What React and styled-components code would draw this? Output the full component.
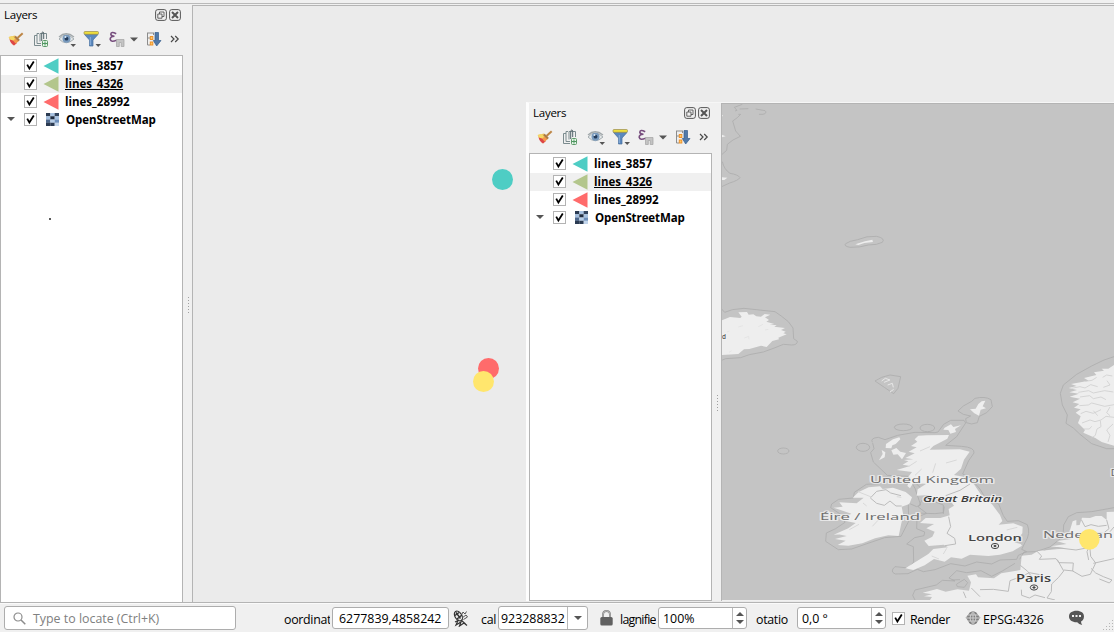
import React from "react";
import styled, { createGlobalStyle } from "styled-components";

const Global = createGlobalStyle`
  * { box-sizing: border-box; }
  body { margin: 0; overflow: hidden; background: #f0f0f0; }
`;

const Window = styled.div`
  width: 1114px;
  height: 632px;
  display: flex;
  flex-direction: column;
  background: #f0f0f0;
  color: #000;
  font-family: "Open Sans", "Noto Sans", sans-serif;
  font-size: 12px;
  overflow: hidden;
`;

const TopEdge = styled.div`
  height: 5px;
  flex: none;
  border-top: 3px solid #f0f0f0;
  &::after { content: ""; display: block; height: 1px; background: #b9b9b9; }
`;

const Workspace = styled.div`
  display: flex;
  height: 598px;
  flex: none;
`;

const Dock = styled.section`
  width: 183px;
  flex: none;
  display: flex;
  flex-direction: column;
`;

const DockTitle = styled.header`
  height: 20px;
  display: flex;
  align-items: center;
  padding: 0 2px 1px 4px;
  gap: 2px;
  font-size: 11.5px;
  letter-spacing: -0.25px;
  svg { display: block; flex: none; }
`;

const TitleText = styled.span`
  flex: 1;
  line-height: 18px;
`;

const Tools = styled.div`
  height: 30px;
  display: flex;
  align-items: center;
  padding: 0 0 2px 7px;
  svg { display: block; }
`;

const Tree = styled.div`
  flex: 1;
  background: #fff;
  border: 1px solid #b4b4b4;
  padding-top: 1px;
`;

const Row = styled.div`
  height: 18px;
  display: flex;
  align-items: center;
  padding-left: 3px;
  background: ${(p) => (p.$current ? "#f0f0f0" : "#fff")};
`;

const Expander = styled.span`
  width: 20px;
  height: 18px;
  display: flex;
  align-items: center;
  padding: 0 0 2px 3px;
  flex: none;
`;

const Check = styled.span`
  display: block;
  width: 13px;
  height: 13px;
  border: 1px solid #b3b3b3;
  background: #fff;
  flex: none;
  margin-bottom: ${(p) => p.$lift || 0}px;
  svg { display: block; }
`;

const Symbol = styled.span`
  width: 28px;
  height: 18px;
  padding: 0 0 1px ${(p) => p.$inset || 6}px;
  display: flex;
  align-items: center;
  flex: none;
`;

const LayerName = styled.span`
  font-weight: 700;
  font-size: 11.5px;
  line-height: 18px;
  letter-spacing: ${(p) => p.$spacing || "0px"};
  text-decoration: ${(p) => (p.$underline ? "underline" : "none")};
  text-underline-offset: 1px;
  white-space: nowrap;
  padding-left: ${(p) => p.$indent || 0}px;
`;

const Splitter = styled.div`
  width: 9px;
  flex: none;
  display: flex;
  flex-direction: column;
  align-items: center;
  gap: 2px;
  padding: 292px 0 0 1px;
`;

const Dot = styled.i`
  width: 1px;
  height: 1px;
  background: #a0a0a0;
`;

const Canvas = styled.main`
  position: relative;
  flex: 1;
  background: #ebebeb;
  border: solid #b4b4b4;
  border-width: 1px 0 1px 1px;
`;

const Marker = styled.span`
  position: absolute;
  left: ${(p) => p.$x}px;
  top: ${(p) => p.$y}px;
  width: ${(p) => p.$size || 21}px;
  height: ${(p) => p.$size || 21}px;
  border-radius: 50%;
  background: ${(p) => p.$color};
`;

const InnerWindow = styled.div`
  position: absolute;
  left: 333px;
  top: 96px;
  width: 588px;
  height: 499px;
  display: flex;
  background: #f0f0f0;
  border-left: 3px solid #fdfdfd;
  border-top: 1px solid #f6f6f6;
`;

const MapFrame = styled.div`
  flex: 1;
  border: solid #b4b4b4;
  border-width: 1px 0 0 1px;
  overflow: hidden;
  svg { display: block; }
`;

const Status = styled.footer`
  flex: 1;
  display: flex;
  align-items: center;
  border-top: 1px solid #fafafa;
  padding: 0 0 0 4px;
  font-size: 12.4px;
  position: relative;
  svg { display: block; flex: none; }
`;

const Field = styled.div`
  width: ${(p) => p.$w}px;
  height: ${(p) => p.$h || 22}px;
  margin-left: ${(p) => p.$ml || 0}px;
  border: 1px solid #adadad;
  border-radius: 3px;
  background: #fff;
  display: flex;
  align-items: center;
  flex: none;
  padding-left: ${(p) => p.$pad || 4}px;
  color: ${(p) => p.$color || "#000"};
  white-space: nowrap;
  overflow: hidden;
`;

const Value = styled.span`
  flex: 1;
  padding-top: 2px;
  padding-left: ${(p) => p.$indent || 0}px;
  line-height: 18px;
`;

const Stepper = styled.span`
  width: ${(p) => p.$w || 14}px;
  height: 100%;
  border-left: 1px solid #b9b9b9;
  display: flex;
  flex-direction: column;
  justify-content: center;
  align-items: center;
  gap: 4px;
  flex: none;
`;

const Label = styled.span`
  width: ${(p) => p.$w}px;
  margin-left: ${(p) => p.$ml}px;
  padding-top: 3px;
  line-height: 18px;
  white-space: nowrap;
  overflow: hidden;
  flex: none;
  letter-spacing: ${(p) => p.$spacing || "-0.3px"};
`;

const StatusIcon = styled.span`
  margin-left: ${(p) => p.$ml}px;
  flex: none;
`;

const Tick = () => (
  <svg width="11" height="11" viewBox="0 0 11 11">
    <path d="M2.2 4.6 L4.4 8.6 L8.8 1.6" fill="none" stroke="#000" strokeWidth="1.8" />
  </svg>
);

const Arrow = ({ up, w = 8, color = "#555" }) => (
  <svg width={w} height="4" viewBox="0 0 8 4">
    <path d={up ? "M0 4 L4 0 L8 4Z" : "M0 0 L4 4 L8 0Z"} fill={color} />
  </svg>
);

const FloatIcon = () => (
  <svg width="12" height="12" viewBox="0 0 12 12" fill="none" stroke="#555">
    <rect x="0.6" y="0.6" width="10.8" height="10.8" rx="2.2" />
    <path d="M4.5 5V3H9V7.5H7M2.8 5H7V9.2H2.8Z" strokeWidth="0.9" />
  </svg>
);

const CloseIcon = () => (
  <svg width="12" height="12" viewBox="0 0 12 12" fill="none" stroke="#555">
    <rect x="0.6" y="0.6" width="10.8" height="10.8" rx="2.2" />
    <path d="M3 3L9 9M9 3L3 9" strokeWidth="2" />
  </svg>
);

const ToolIcons = () => (
  <svg width="176" height="24" viewBox="7 27 176 24" fill="none">
    {/* style brush */}
    <path d="M8.7 37L15 35.5L19.5 40L14 45.5Q10.5 43 8.7 37Z" fill="#e9bd5c" />
    <path d="M8.7 37L13 36L15.5 40L12 42Z" fill="#f5d866" />
    <path d="M9.5 39.5L13 40.5L17 43L14 45.5Q11 44 9.5 39.5Z" fill="#dd4547" />
    <path d="M13 40.5L16 38.5L19.5 40.5L15.5 43.5Z" fill="#f39a4b" />
    <path d="M15 36.5L19 40.5" stroke="#a97a48" strokeWidth="2" />
    <path d="M17.5 38L22.7 33.2" stroke="#bd8545" strokeWidth="2" />
    {/* add group */}
    <path d="M37 35.5H34.5V45.5H41M39 33.5H37V43.5H41" stroke="#7b8b8e" />
    <path d="M40 41.5V33.5H46.5V39" stroke="#7b8b8e" />
    <path d="M41.7 41V33.5Q43 30 43.7 33.5V39" stroke="#52646a" />
    <rect x="42.5" y="40.5" width="5" height="6" rx="1" fill="#e5f5e7" stroke="#5d9a69" />
    <path d="M45 41.5V45.5M43 43.5H47" stroke="#4d9760" />
    {/* visibility */}
    <path d="M59 39Q66 31 74 39Q66 46.5 59 39Z" fill="#e4e8e9" stroke="#a4acb0" />
    <circle cx="66.5" cy="38.7" r="4" fill="#7799bd" />
    <circle cx="66.5" cy="38.7" r="1.9" fill="#243b5a" />
    <circle cx="65.5" cy="37" r="1" fill="#dce9f5" />
    <path d="M59 37Q66 30.5 74 37" stroke="#a0a7aa" strokeWidth="1.3" />
    <path d="M70.5 44H76L73.2 47Z" fill="#555" />
    {/* filter */}
    <path d="M84.5 34.5H98L93 40V46H89.5V40Z" fill="#5b88bd" stroke="#456d9b" strokeWidth="0.7" />
    <rect x="84" y="31.5" width="14.5" height="2.8" rx="1" fill="#efdf3c" stroke="#998d4d" strokeWidth="0.7" />
    <path d="M90.3 37V45" stroke="#8bb1dd" />
    <path d="M95.5 44H101L98.2 47Z" fill="#555" />
    {/* filter by expression */}
    <path d="M116.2 33.7Q111 31.2 110.8 34.2Q111 36.1 114.5 36.2Q110 36.3 110.2 39.3Q111 42.8 116.7 40.1" stroke="#764d7d" strokeWidth="1.6" />
    <path d="M116.5 39.5H124V46.5H121.2V42.5H119.3V46.5H116.5Z" fill="#c4c4c4" stroke="#a2a2a2" strokeWidth="0.7" />
    <path d="M130 37.5H138L134 41.5Z" fill="#555" />
    {/* expand all */}
    <path d="M147 33H154M147.5 33V45H150M153.5 33V35M147.5 38H150" stroke="#8c8c8c" />
    <rect x="150.3" y="36.5" width="2.5" height="3" fill="#ffc966" stroke="#ef9229" />
    <rect x="150.3" y="42" width="2.5" height="3" fill="#ffc966" stroke="#ef9229" />
    <path d="M155 32.5H158.5V40.5H161L156.7 46L153.3 40.5H155Z" fill="#5179a8" stroke="#375f8e" strokeWidth="0.7" />
    <path d="M171 36L174 39L171 42M175.2 36L178.2 39L175.2 42" stroke="#484848" strokeWidth="1.2" />
  </svg>
);

const Fan = ({ color }) => (
  <svg width="16" height="16" viewBox="0 0 16 16">
    <path d="M0.5 8 L15.5 0.2 V15.8Z" fill={color} />
  </svg>
);

const RASTER = [
  "#2b3b52", "#a9c3e2", "#33455f",
  "#a3bede", "#1f2c40", "#a9c3e2",
  "#4c678c", "#b7cee8", "#6d8fbb",
  "#2b3b52", "#2b3b52", "#c3d6ec",
];

const RasterIcon = () => (
  <svg width="13" height="13" viewBox="0 0 12 12">
    {RASTER.map((c, i) => (
      <rect key={i} x={(i % 3) * 4} y={Math.floor(i / 3) * 3} width="4.1" height="3.1" fill={c} />
    ))}
  </svg>
);

const LAYERS = [
  { name: "lines_3857", color: "#4ecdc4" },
  { name: "lines_4326", color: "#b3c68c", current: true },
  { name: "lines_28992", color: "#ff6b6b" },
];

const LayersDock = () => (
  <Dock>
    <DockTitle>
      <TitleText>Layers</TitleText>
      <FloatIcon />
      <CloseIcon />
    </DockTitle>
    <Tools><ToolIcons /></Tools>
    <Tree>
      {LAYERS.map((l) => (
        <Row key={l.name} $current={l.current}>
          <Expander />
          <Check $lift={2}><Tick /></Check>
          <Symbol><Fan color={l.color} /></Symbol>
          <LayerName $underline={l.current}>{l.name}</LayerName>
        </Row>
      ))}
      <Row>
        <Expander><Arrow /></Expander>
        <Check $lift={2}><Tick /></Check>
        <Symbol $inset={9}><RasterIcon /></Symbol>
        <LayerName $indent={1} $spacing="-0.1px">OpenStreetMap</LayerName>
      </Row>
    </Tree>
  </Dock>
);

const Grip = () => (
  <Splitter>
    {[0, 1, 2, 3, 4, 5].map((i) => <Dot key={i} />)}
  </Splitter>
);

const Place = ({ x, y, w, size = 9.5, color = "#6c6c6c", bold, italic, children }) => (
  <text
    x={x} y={y} textLength={w} lengthAdjust="spacingAndGlyphs"
    fontFamily='"Open Sans", "Noto Sans", sans-serif' fontSize={size}
    fontWeight={bold ? 600 : 400} fontStyle={italic ? "italic" : "normal"}
    fill={color} stroke="#f2f2f2" strokeWidth="2.2" strokeOpacity="0.75"
    strokeLinejoin="round" paintOrder="stroke"
  >
    {children}
  </text>
);

const NorthernEurope = () => (
  <svg width="392" height="496" viewBox="722 104 392 496">
    <rect x="722" y="104" width="392" height="496" fill="#c4c4c4" />
    {/* Greenland coast, Jan Mayen and Iceland */}
    <g transform="translate(715 100) scale(0.33333)" fill="none" stroke="#acacac" strokeWidth="2.4">
      <path d="M82 13L58 22L66 31L60 33M74 27L100 26M122 27L150 32Q158 39 144 43L132 43M70 43H77L67 53L53 63L62 93L76 109L54 120L37 133L35 151L20 164M22 185Q27 208 45 220Q70 224 75 233Q70 241 44 249L20 260" />
      <path d="M392 431Q402 423 428 419Q455 407 485 409Q512 415 502 427Q487 435 460 435Q435 443 405 442Q385 438 392 431Z" />
      <path d="M20 627L29 637L52 629L87 625L133 630L180 635L200 649L220 665L234 684L236 716L247 724Q247 735 230 735L205 733L178 744L145 756L103 764L77 773L32 776L20 781" />
      <g fill="#eee" stroke="none">
        <path d="M20 661L45 651L76 654L80 650L70 637L96 636L101 644L115 643L124 649L138 650L149 642L166 644L150 652L162 660L154 665L178 672L164 675L185 675L178 680L210 684L198 690L212 695L205 700L215 703L190 713L192 718L172 723L155 741L138 737L103 747L87 748L70 762L20 765Z" />
        <path d="M421 433L450 424L472 419L474 426L448 429L430 435Z" />
        <path d="M20 104L32 109L20 112ZM20 232L37 233L28 240L20 240ZM20 43L24 47L20 50Z" />
      </g>
      <path d="M70 681L84 677M88 714L101 709L102 718M150 690L160 688M36 696L43 693M130 680L144 673M42 757L50 752" stroke="#dfdfdf" strokeWidth="2" />
    </g>
    {/* British Isles, Norway and the continent */}
    <g transform="translate(800 360) scale(0.33333)" fill="none" stroke="#acacac" strokeWidth="2.4" strokeLinejoin="round">
      <path d="M225 63L245 52L270 45L302 50L294 85L281 101L253 82Z" />
      <ellipse cx="310" cy="202" rx="27" ry="10" />
      <ellipse cx="382" cy="204" rx="22" ry="11" />
      <ellipse cx="189" cy="262" rx="20" ry="12" />
      <ellipse cx="-50" cy="273" rx="17" ry="9" />
      <path d="M474 153L490 138L515 124L525 115Q555 108 573 119L577 140L560 158L538 169L532 188L515 192L499 188L497 176L512 168L490 163Z" />
      <path d="M217 247Q210 234 235 232L255 239L293 226L345 217L405 218L414 216L431 193L452 181L492 181L497 189L470 230L437 256L485 259Q525 262 522 279L506 302L488 342L510 353L540 387L555 412L596 432L610 467L622 484L655 482L682 494Q693 520 675 548L665 568L680 575L655 586L650 598L600 600L575 612L530 606L495 618L452 611L405 629L370 635L352 628L324 641L286 642Q268 635 285 620L326 624L341 606L340 560L320 552L344 533L372 527L374 516L350 506L351 472L380 460L355 441L366 420L401 424L430 435L430 462M350 459L405 461L430 458L433 440M350 372L368 390L395 400" />
      <path d="M218 249L222 266L212 278L220 306L262 346L324 349L345 385L362 435L350 440L325 429L326 484L303 529L254 533L207 549L155 567L115 569L77 544L79 519L107 506L135 487L125 465L92 443L95 432L116 418L160 414L163 397L199 373L236 371" />
      <path d="M942 -10L912 0L875 18L830 43L790 75L781 100L787 135L802 165L798 190L820 204L839 222L875 251L920 266H942" />
      <path d="M942 443L875 455L830 458L805 470L791 495L789 530L750 561L707 575L672 576L659 598M645 610L607 633L575 649L543 632L500 638L470 632L447 654L465 663L427 661L409 675L345 690L338 706L345 720M455 660L480 659M475 669Q465 672 472 680L493 682L503 668L493 658Z" />
      <g fill="#eee" stroke="none">
        <path d="M535 132L545 124L556 122L548 139L558 145L542 149L537 167L523 160L510 148L527 146ZM434 203L453 193L460 201L483 196L465 207L468 216L451 221L445 210L430 209Z" />
        <path d="M258 252L279 238L298 232L301 238L287 252L277 256L274 265L257 264ZM245 270L256 277L254 292L237 301L248 282ZM274 271L289 264L301 275L318 279L306 298L293 283L280 284Z" />
        <path d="M355 227L380 226L447 225L442 236L400 258L389 269L480 268L509 275L492 299L483 326L462 345L490 350L522 373L545 407L576 433L600 465L607 483L596 494L640 490L668 500L667 520L655 535L644 547L662 552L666 557L638 574L600 584L565 588L510 584L485 596L453 592L434 605L402 597L374 616L340 630L316 625L350 604L385 582L400 567L444 562L431 554L386 558L373 542L397 530L404 515L379 505L402 492L360 489L377 474L421 474L449 466L446 447L462 437L450 421L430 427L386 405L350 407L353 388L379 371L339 370L330 385L322 378L332 354L325 350L336 336L290 330L330 318L308 314L325 304L312 300L340 298L316 294L344 280L326 275L350 262L333 258L352 245L344 238Z" />
        <path d="M158 413L176 396L206 382L240 379L248 387L279 383L317 396L336 412L328 432L305 440L310 466L304 490L296 528L265 526L225 535L187 550L145 557L113 555L137 542L105 537L140 528L115 523L152 522L101 524L145 505L167 489L119 479L154 461L101 443L128 440L118 427L170 430L191 413Z" />
        <path d="M942 15L925 26L905 26L912 32L882 37L889 45L852 54L866 62L813 72L830 78L806 84L831 90L808 97L837 101L809 110L840 116L818 127L838 132L822 143L842 148L827 158L842 169L834 189L855 210L850 218L886 234L905 246L942 257Z" />
        <path d="M942 455L920 456L920 480L905 468L887 468L870 474L846 473L839 495L829 496V480L818 484L809 514L830 522L790 528L815 537L770 543L800 552L752 559L800 565L714 573L695 584L665 587L661 630L604 640L582 655L534 652L528 643L502 647L513 667L507 692L472 688L437 695L411 687L368 698L396 703L372 709L396 711L390 720H942Z" />
      </g>
      <path d="M245 63L256 55L270 60L252 67M263 75L277 70L280 82M270 96L281 88" stroke="#e8e8e8" strokeWidth="3" />
      <path d="M815 85L840 80L855 84L872 74L893 80M835 97L866 92L880 99L914 92L940 96M840 111L869 107L880 116L903 111L918 119M838 137L865 135L875 129L914 139L942 134M842 161L858 154L880 160L903 149M846 189L870 180L885 185L903 180L918 169L942 172M872 236L886 226L891 207L903 200L901 182M924 246L930 226L920 210L939 192M850 207L868 207L875 199M856 64L876 61L890 52M908 52L920 45L937 48M921 62L930 75L910 82M930 141L920 158L930 167M880 152L893 167" stroke="#cbcbcb" strokeWidth="2.2" />
      <path d="M212 413L230 394L258 389L272 399L303 407M211 414L230 430L253 436L270 423L288 438L305 438M437 407L480 391L510 372M446 470L452 500L441 520L464 535L467 552L435 557M661 616L683 634L694 649M711 574L725 588L718 598L768 596L777 608L820 609L818 633L846 649L871 643L887 609L872 589L870 567M731 570L770 563L828 570L860 564M880 610L942 596M772 599L791 633L776 652L755 672L754 695L741 714L765 720M791 630L820 633M660 652L688 638L720 644M664 689L665 706L688 714L705 705L735 713M540 689L580 688L625 694L630 662L660 651M490 695L498 714M514 684L540 710M873 625L887 639L910 650L936 660L928 669L898 657M844 479L855 500L873 494L895 499L920 496M920 480L927 506L910 520L885 517M872 550L861 575L866 600M942 501L930 515" stroke="#bbb" strokeWidth="3" />
      <path d="M174 395L214 411M189 429L200 438M148 509L177 493M237 478L217 499M290 410L304 412M345 346L365 327M398 338L407 310M325 320L350 304M390 260L360 273M470 300L438 309M440 565L430 582M395 588L417 597M620 510L652 502" stroke="#d8d8d8" strokeWidth="3" />
    </g>
    <Place x="870" y="482.7" w="124">United Kingdom</Place>
    <Place x="923" y="502" w="79" size={8.5} color="#3c3c3c" bold italic>Great Britain</Place>
    <Place x="820" y="519.5" w="100">Éire / Ireland</Place>
    <Place x="968" y="541" w="54" size={9.5} color="#444" bold>London</Place>
    <Place x="1016" y="582" w="35" size={10} color="#404040" bold>Paris</Place>
    <Place x="1043" y="538" w="70">Nederlan</Place>
    <Place x="1110.5" y="475.5" w="9">D</Place>
    <Place x="722" y="339" w="4" size={7} color="#555" bold>d</Place>
    {[[995, 546], [1034, 587.5]].map(([x, y]) => (
      <g key={x} fill="none" stroke="#484848">
        <ellipse cx={x} cy={y} rx="3.7" ry="2.6" />
        <ellipse cx={x} cy={y} rx="1.2" ry="0.7" fill="#444" />
      </g>
    ))}
    <circle cx="1089.3" cy="539.4" r="10.3" fill="#ffe66d" />
  </svg>
);

const SearchIcon = () => (
  <svg width="13" height="13" viewBox="0 0 13 13" fill="none" stroke="#8c8c8c" strokeWidth="1.2">
    <circle cx="5" cy="5" r="4" /><path d="M8 8L12.3 12.3" strokeWidth="1.5" />
  </svg>
);

const ExtentsIcon = () => (
  <svg width="16" height="17" viewBox="0 0 16 17" fill="none" stroke="#333">
    <ellipse cx="5.4" cy="6" rx="3.4" ry="5.4" transform="rotate(-32 5.4 6)" fill="#eee" strokeWidth="1.2" />
    <path d="M2 5.5L6 2.5M4 9L9 5M3 2.5L7.5 8.5" strokeWidth="1.4" />
    <path d="M8.5 5L10 2L12 4L13.5 1.5M9 8L13 5L14.5 7L10.5 9.5" strokeWidth="1" stroke="#555" />
    <path d="M2 12L5 10.5L3 15L8 12L6.5 16L11 13L14 15.5M8 10L12.5 14" strokeWidth="1.2" />
  </svg>
);

const LockIcon = () => (
  <svg width="13" height="16" viewBox="0 0 13 16">
    <path d="M3 8V4.7Q3 1 6.5 1Q10 1 10 4.7V8" fill="none" stroke="#888" strokeWidth="2" />
    <path d="M3 8V4.7Q3 1 6.5 1Q10 1 10 4.7V8" fill="none" stroke="#ccc" strokeWidth="0.6" />
    <rect x="0.3" y="7" width="12.4" height="8.5" rx="1.5" fill="#616161" />
  </svg>
);

const GlobeIcon = () => (
  <svg width="16" height="15" viewBox="0 0 16 15">
    <path d="M0.5 6.8L4 3H12L15.5 6.8L12 10.5H4Z" fill="#999" />
    <circle cx="8" cy="7" r="5.9" fill="#808080" />
    <path d="M8 1V13M1 7H15M3 4H13M3 10H13M8 1Q2 7 8 13M8 1Q14 7 8 13" fill="none" stroke="#d6d6d6" strokeWidth="0.9" />
    <path d="M4 2.5Q8 -1 12 2.5M4 11.5Q8 15 12 11.5" fill="none" stroke="#777" strokeWidth="0.8" />
  </svg>
);

const MessageIcon = () => (
  <svg width="17" height="16" viewBox="0 0 17 16">
    <path d="M8.5 0.8C13 0.8 16 3 16 6.5C16 9.5 14 11 13 11.6Q13 13.5 14.2 15Q10.8 14.6 9.2 12.3C4.2 12.5 1 10 1 6.5C1 3 4 0.8 8.5 0.8Z" fill="#555" />
    <path d="M4 6H6M7.5 6H9.5M11 6H13" stroke="#f0f0f0" strokeWidth="1.8" />
  </svg>
);

const GripIcon = () => (
  <svg width="12" height="12" viewBox="0 0 12 12" fill="#b5b5b5">
    {[[9, 0], [9, 3], [9, 6], [9, 9], [6, 3], [6, 6], [6, 9], [3, 6], [3, 9], [0, 9]].map(([x, y]) => (
      <rect key={`${x}-${y}`} x={x} y={y} width="1" height="1" />
    ))}
  </svg>
);

const StatusEdge = styled.div`
  height: 1px;
  flex: none;
  margin-top: -1px;
  background: #b4b4b4;
`;

const CornerGrip = styled.span`
  position: absolute;
  right: -1px;
  bottom: 0;
`;

const SpinArrows = () => (
  <Stepper><Arrow up /><Arrow /></Stepper>
);

export default function App() {
  return (
    <Window>
      <Global />
      <TopEdge />
      <Workspace>
        <LayersDock />
        <Grip />
        <Canvas>
          <Marker $x={299} $y={163} $color="#4ecdc4" />
          <Marker $x={285} $y={352} $color="#ff6b6b" />
          <Marker $x={280} $y={365} $color="#ffe66d" />
          <Marker $x={-144} $y={212} $size={2} $color="#222" />
          <InnerWindow>
            <LayersDock />
            <Grip />
            <MapFrame><NorthernEurope /></MapFrame>
          </InnerWindow>
        </Canvas>
      </Workspace>
      <StatusEdge />
      <Status>
        <Field $w={232} $h={24} $pad={8} $color="#808080">
          <SearchIcon />
          <Value $indent={7}>Type to locate (Ctrl+K)</Value>
        </Field>
        <Label $ml={48} $w={46}>oordinat</Label>
        <Field $ml={2} $w={117} $pad={6}><Value>6277839,4858242</Value></Field>
        <StatusIcon $ml={4}><ExtentsIcon /></StatusIcon>
        <Label $ml={12} $w={16}>cal</Label>
        <Field $ml={1} $w={90} $h={24} $pad={2}>
          <Value>923288832</Value>
          <Stepper $w={20}><Arrow /></Stepper>
        </Field>
        <StatusIcon $ml={12}><LockIcon /></StatusIcon>
        <Label $ml={7} $w={36} $spacing="-0.75px">lagnifie</Label>
        <Field $ml={2} $w={89}><Value>100%</Value><SpinArrows /></Field>
        <Label $ml={9} $w={33}>otatio</Label>
        <Field $ml={8} $w={89}><Value>0,0 °</Value><SpinArrows /></Field>
        <StatusIcon $ml={6}><Check><Tick /></Check></StatusIcon>
        <Label $ml={5} $w={46} $spacing="-0.3px">Render</Label>
        <StatusIcon $ml={9}><GlobeIcon /></StatusIcon>
        <Label $ml={2} $w={64} $spacing="-0.1px">EPSG:4326</Label>
        <StatusIcon $ml={21}><MessageIcon /></StatusIcon>
        <CornerGrip><GripIcon /></CornerGrip>
      </Status>
    </Window>
  );
}
